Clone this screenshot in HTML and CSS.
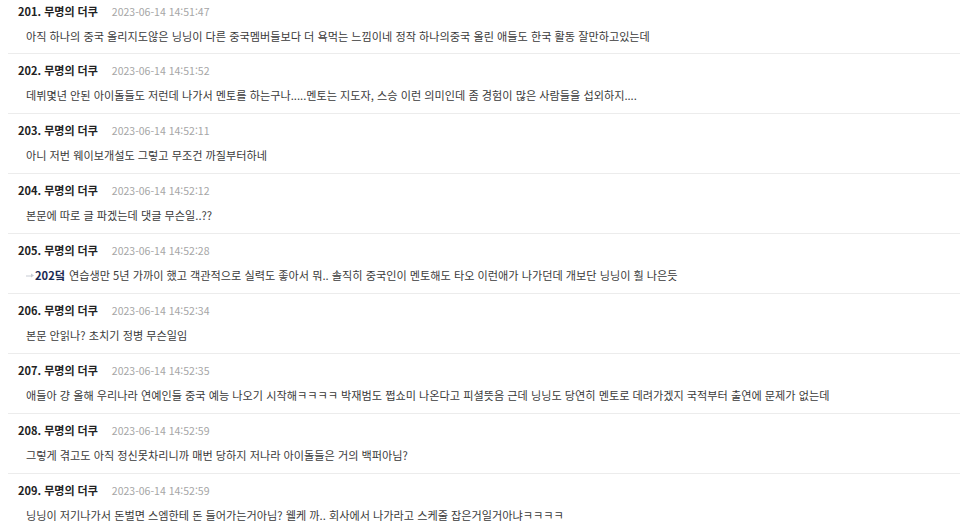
FILE: index.html
```html
<!DOCTYPE html>
<html lang="ko">
<head>
<meta charset="utf-8">
<link rel="stylesheet" href="styles.css">
</head>
<body>
<ul class="comments">
  <li class="item">
    <div class="head"><span class="name">201. 무명의 더쿠</span><span class="date">2023-06-14 14:51:47</span></div>
    <div class="text">아직 하나의 중국 올리지도않은 닝닝이 다른 중국멤버들보다 더 욕먹는 느낌이네 정작 하나의중국 올린 애들도 한국 활동 잘만하고있는데</div>
  </li>
  <li class="item">
    <div class="head"><span class="name">202. 무명의 더쿠</span><span class="date">2023-06-14 14:51:52</span></div>
    <div class="text">데뷔몇년 안된 아이돌들도 저런데 나가서 멘토를 하는구나.....멘토는 지도자, 스승 이런 의미인데 좀 경험이 많은 사람들을 섭외하지....</div>
  </li>
  <li class="item">
    <div class="head"><span class="name">203. 무명의 더쿠</span><span class="date">2023-06-14 14:52:11</span></div>
    <div class="text">아니 저번 웨이보개설도 그렇고 무조건 까질부터하네</div>
  </li>
  <li class="item">
    <div class="head"><span class="name">204. 무명의 더쿠</span><span class="date">2023-06-14 14:52:12</span></div>
    <div class="text">본문에 따로 글 파겠는데 댓글 무슨일..??</div>
  </li>
  <li class="item">
    <div class="head"><span class="name">205. 무명의 더쿠</span><span class="date">2023-06-14 14:52:28</span></div>
    <div class="text"><svg class="reply-ico" width="8" height="6" viewBox="0 0 8 6"><path d="M0 3.5 L5 3.5 L5 1.5 L8 3.5 L5 5.5 L5 4.5 L0 4.5 Z" fill="#c8ccd4"/></svg><a class="ref">202덬</a> 연습생만 5년 가까이 했고 객관적으로 실력도 좋아서 뭐.. 솔직히 중국인이 멘토해도 타오 이런애가 나가던데 개보단 닝닝이 훨 나은듯</div>
  </li>
  <li class="item">
    <div class="head"><span class="name">206. 무명의 더쿠</span><span class="date">2023-06-14 14:52:34</span></div>
    <div class="text">본문 안읽나? 초치기 정병 무슨일임</div>
  </li>
  <li class="item">
    <div class="head"><span class="name">207. 무명의 더쿠</span><span class="date">2023-06-14 14:52:35</span></div>
    <div class="text">애들아 걍 올해 우리나라 연예인들 중국 예능 나오기 시작해ㅋㅋㅋㅋ 박재범도 쩝쇼미 나온다고 피셜뜻음 근데 닝닝도 당연히 멘토로 데려가겠지 국적부터 출연에 문제가 없는데</div>
  </li>
  <li class="item">
    <div class="head"><span class="name">208. 무명의 더쿠</span><span class="date">2023-06-14 14:52:59</span></div>
    <div class="text">그렇게 겪고도 아직 정신못차리니까 매번 당하지 저나라 아이돌들은 거의 백퍼아님?</div>
  </li>
  <li class="item">
    <div class="head"><span class="name">209. 무명의 더쿠</span><span class="date">2023-06-14 14:52:59</span></div>
    <div class="text">닝닝이 저기나가서 돈벌면 스엠한테 돈 들어가는거아님? 웰케 까.. 회사에서 나가라고 스케줄 잡은거일거아냐ㅋㅋㅋㅋ</div>
  </li>
</ul>
</body>
</html>
```

FILE: styles.css
```css
html, body {
  margin: 0;
  padding: 0;
  background: #ffffff;
}
body {
  font-family: "Noto Sans CJK KR", "Noto Sans", "Liberation Sans", sans-serif;
  overflow: hidden;
}
.comments {
  list-style: none;
  margin: 0;
  padding: 0 0 0 8px;
}
.item {
  box-sizing: border-box;
  height: 60px;
  padding: 6px 0 0 10px;
  border-bottom: 1px solid #ececec;
}
.item:first-child {
  height: 54px;
  padding-top: 1px;
}
.head {
  display: flex;
  align-items: center;
  gap: 14px;
  height: 20px;
  white-space: nowrap;
}
.name {
  font-size: 11px;
  font-weight: 700;
  color: #222222;
}
.date {
  font-size: 10.5px;
  color: #a6a6a6;
}
.text {
  margin-top: 5px;
  padding-left: 8px;
  font-size: 11.15px;
  line-height: 20px;
  height: 20px;
  color: #3a3a3a;
  white-space: nowrap;
  display: flex;
  align-items: center;
}
.reply-ico {
  margin-right: 1px;
  flex: none;
}
.ref {
  font-weight: 700;
  color: #1b2a52;
  margin-right: 4px;
}
```
